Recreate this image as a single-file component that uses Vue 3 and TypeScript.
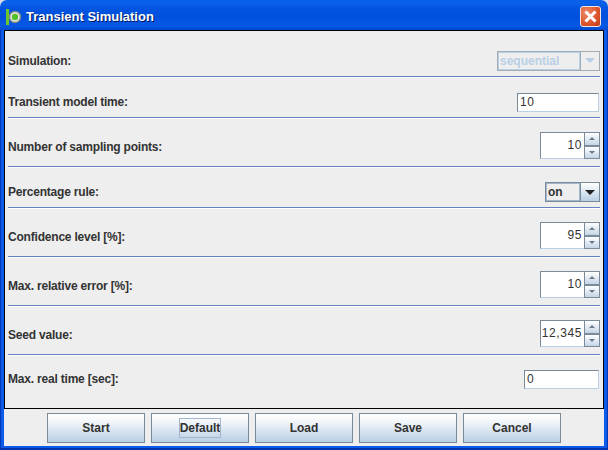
<script setup lang="ts">
type Row = {
  label: string
  kind: 'select' | 'text' | 'spin'
  value: string
  disabled?: boolean
  wide?: boolean
}

const rows: Row[] = [
  { label: 'Simulation:', kind: 'select', value: 'sequential', disabled: true, wide: true },
  { label: 'Transient model time:', kind: 'text', value: '10', wide: true },
  { label: 'Number of sampling points:', kind: 'spin', value: '10' },
  { label: 'Percentage rule:', kind: 'select', value: 'on' },
  { label: 'Confidence level [%]:', kind: 'spin', value: '95' },
  { label: 'Max. relative error [%]:', kind: 'spin', value: '10' },
  { label: 'Seed value:', kind: 'spin', value: '12,345' },
  { label: 'Max. real time [sec]:', kind: 'text', value: '0' },
]

const buttons = ['Start', 'Default', 'Load', 'Save', 'Cancel']
</script>

<template>
  <div class="window">
    <div class="titlebar">
      <svg class="app-icon" width="16" height="16" viewBox="0 0 16 16" aria-hidden="true">
        <rect x="0" y="0" width="3" height="16" fill="#6cc52e" />
        <circle cx="9" cy="8" r="5.5" fill="#e6e9e6" stroke="#808a82" stroke-width="1.4" />
        <circle cx="9" cy="8" r="3.2" fill="#55c02c" />
      </svg>
      <span class="title">Transient Simulation</span>
      <button class="close" type="button" aria-label="Close">
        <svg width="21" height="21" viewBox="0 0 21 21" aria-hidden="true">
          <path d="M5.5 5.5 L15.5 15.5 M15.5 5.5 L5.5 15.5" stroke="#fff" stroke-width="3" fill="none" />
        </svg>
      </button>
    </div>
    <div class="body">
      <div class="panel">
        <div v-for="row in rows" :key="row.label" class="row" :class="`row--${row.kind}`">
          <span class="label">{{ row.label }}</span>

          <div v-if="row.kind === 'select'" class="select" :class="{ 'select--off': row.disabled, 'select--wide': row.wide }">
            <span class="select__value">{{ row.value }}</span>
            <span class="select__arrow"><i></i></span>
          </div>

          <div v-else-if="row.kind === 'text'" class="text-field" :class="{ 'text-field--wide': row.wide }">{{ row.value }}</div>

          <div v-else class="spinner">
            <div class="spinner__value">{{ row.value }}</div>
            <div class="spinner__btns">
              <span class="spin-btn"><i class="up"></i></span>
              <span class="spin-btn"><i class="down"></i></span>
            </div>
          </div>
        </div>
      </div>
      <div class="actions">
        <button v-for="b in buttons" :key="b" class="btn" type="button">
          <span :class="{ focus: b === 'Default' }">{{ b }}</span>
        </button>
      </div>
    </div>
  </div>
</template>

<style>
html, body {
  margin: 0;
  background: #0a3fd0;
}
</style>

<style scoped>
.window {
  width: 608px;
  height: 450px;
  display: flex;
  flex-direction: column;
  overflow: hidden;
  font-family: "Liberation Sans", Arial, sans-serif;
  background: #d9dde6;
}

.titlebar {
  height: 30px;
  flex: none;
  display: flex;
  align-items: center;
  padding: 3px 7px 0 6px;
  box-sizing: border-box;
  border-radius: 7px 7px 0 0;
  background: linear-gradient(#0a5fe8 0%, #0a62ea 10%, #0456e2 25%, #0050dc 55%, #0559e6 85%, #0349d0 100%);
}

.app-icon {
  flex: none;
  margin-right: 4px;
}

.title {
  flex: 1;
  color: #fff;
  font-size: 13px;
  font-weight: 700;
  text-shadow: 1px 1px 0 #00145a;
}

.close {
  width: 21px;
  height: 21px;
  padding: 0;
  border: 1px solid #f4e4de;
  border-radius: 3px;
  background: radial-gradient(circle at 30% 30%, #ee8a68, #dc5430 60%, #bd3d1a);
  display: block;
  box-sizing: border-box;
}

.close svg {
  display: block;
  margin: -1px;
}

.body {
  flex: 1;
  padding: 0 4px 4px;
  background: #0a5bea;
  box-shadow: inset 1px 0 #0339b8, inset -1px 0 #0339b8, inset 0 -2px #0333a8;
  display: flex;
  flex-direction: column;
  min-height: 0;
}

.panel {
  height: 379px;
  flex: none;
  box-sizing: border-box;
  border: 1px solid #000;
  background: #eeeeee;
  padding: 0 3px;
  display: flex;
  flex-direction: column;
}

.row {
  flex: none;
  height: 49px;
  padding-top: 7px;
  box-sizing: border-box;
  display: flex;
  align-items: center;
  justify-content: space-between;
  border-bottom: 1px solid #6382bf;
  box-shadow: 0 1px 0 #fff;
}

.row:nth-child(1) { height: 46px; padding-top: 14px; }
.row:nth-child(2),
.row:nth-child(4) { height: 41px; padding-top: 10px; }
.row:last-child {
  height: 54px;
  padding-top: 0;
  padding-bottom: 6px;
  border-bottom: none;
  box-shadow: none;
}

.label {
  font-size: 12px;
  font-weight: 700;
  color: #333333;
  letter-spacing: -0.2px;
}

.row--spin .label {
  padding-top: 3px;
}

.select {
  width: 103px;
  height: 20px;
  box-sizing: border-box;
  display: flex;
  border: 1px solid #7a8a99;
  font-size: 12px;
  font-weight: 700;
  color: #333333;
  background: #eeeeee;
}

.select__value {
  flex: 1;
  padding-left: 1px;
  line-height: 16px;
  border: 1px solid #a3b8cc;
  min-width: 0;
}

.select__arrow {
  width: 18px;
  flex: none;
  display: flex;
  align-items: center;
  justify-content: center;
  border-left: 1px solid #7a8a99;
  background: linear-gradient(#ffffff, #b8cfe5);
}

.select__arrow i {
  width: 0;
  height: 0;
  border-left: 5px solid transparent;
  border-right: 5px solid transparent;
  border-top: 5px solid #222222;
}

.select:not(.select--wide) {
  width: 55px;
}

.select--off {
  color: #b8cfe5;
  border-color: #a3abb3;
}

.select--off .select__value {
  border-color: #b8cfe5;
}

.select--off .select__arrow {
  background: #eeeeee;
  border-left-color: #a3abb3;
}

.select--off .select__arrow i {
  border-top-color: #b8cfe5;
}

.text-field {
  width: 82px;
  height: 19px;
  margin-right: 1px;
  box-sizing: border-box;
  background: #fff;
  border: 1px solid #7a8a99;
  border-right-color: #b8cfe5;
  border-bottom-color: #b8cfe5;
  font-size: 12px;
  line-height: 17px;
  padding-left: 2px;
  color: #333333;
  letter-spacing: 0.6px;
}

.text-field:not(.text-field--wide) {
  width: 75px;
}

.spinner {
  display: flex;
  height: 27px;
  width: 60px;
}

.spinner__value {
  flex: 1;
  box-sizing: border-box;
  background: #fff;
  border: 1px solid #7a8a99;
  border-right: none;
  border-bottom-color: #b8cfe5;
  text-align: right;
  font-size: 12px;
  line-height: 25px;
  padding-right: 2px;
  color: #333333;
  letter-spacing: 0.6px;
}

.spinner__btns {
  width: 16px;
  flex: none;
  display: flex;
  flex-direction: column;
}

.spin-btn {
  flex: 1;
  box-sizing: border-box;
  border: 1px solid #7a8a99;
  background: linear-gradient(#ffffff, #c4d5e6);
  display: flex;
  align-items: center;
  justify-content: center;
}

.spin-btn i {
  width: 0;
  height: 0;
  border-left: 3px solid transparent;
  border-right: 3px solid transparent;
}

.spin-btn .up { border-bottom: 3px solid #6b7a89; }
.spin-btn .down { border-top: 3px solid #6b7a89; }

.actions {
  flex: 1;
  display: flex;
  justify-content: center;
  align-items: flex-start;
  gap: 6px;
  padding-top: 4px;
  background: #eeeeee;
}

.btn {
  width: 98px;
  height: 30px;
  padding: 0;
  box-sizing: border-box;
  border: 1px solid #7a8a99;
  background: linear-gradient(#ffffff 0%, #f4f7fa 25%, #b8cfe5 100%);
  font-family: inherit;
  font-size: 12px;
  font-weight: 700;
  color: #333333;
}

.btn .focus {
  outline: 1px solid #a3b8cc;
  outline-offset: 0;
  padding: 2px 0;
}
</style>
